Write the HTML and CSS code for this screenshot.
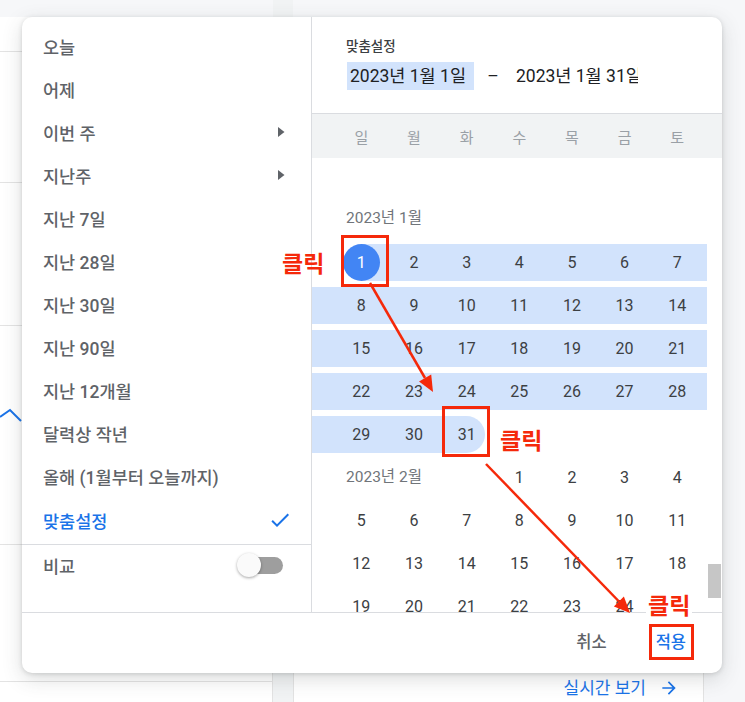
FILE: index.html
```html
<!DOCTYPE html>
<html lang="ko">
<head>
<meta charset="utf-8">
<title>기간 선택</title>
<link rel="stylesheet" href="styles.css">
</head>
<body>
<div class="page">
  <div class="bg-left">
    <div class="bg-row h35"></div>
    <div class="bg-row h131"></div>
    <div class="bg-row h143"></div>
    <div class="bg-row h139">
      <svg class="chev" width="22" height="20" viewBox="0 0 22 20"><polyline points="0,11 10,4 21,15" fill="none" stroke="#1a73e8" stroke-width="2"/></svg>
    </div>
    <div class="bg-row h137"></div>
  </div>
  <div class="bg-gutter"></div>
  <div class="bg-main">
    <a class="realtime">실시간 보기
      <svg width="20" height="20" viewBox="0 0 24 24"><path d="M12 4l-1.41 1.41L16.17 11H4v2h12.17l-5.58 5.59L12 20l8-8z" fill="#1a73e8"/></svg>
    </a>
  </div>
  <div class="bg-right"></div>
</div>

<div class="dialog">
  <div class="presets">
    <ul class="preset-list">
      <li>오늘</li>
      <li>어제</li>
      <li>이번 주<svg class="icon" width="24" height="24" viewBox="0 0 24 24"><polygon points="10,7 16.5,12 10,17" fill="#5f6368"/></svg></li>
      <li>지난주<svg class="icon" width="24" height="24" viewBox="0 0 24 24"><polygon points="10,7 16.5,12 10,17" fill="#5f6368"/></svg></li>
      <li>지난 7일</li>
      <li>지난 28일</li>
      <li>지난 30일</li>
      <li>지난 90일</li>
      <li>지난 12개월</li>
      <li>달력상 작년</li>
      <li>올해 (1월부터 오늘까지)</li>
      <li class="active">맞춤설정<svg class="icon" width="24" height="24" viewBox="0 0 24 24"><path d="M9 16.17L4.83 12l-1.42 1.41L9 19 21 7l-1.41-1.41z" fill="#1a73e8"/></svg></li>
    </ul>
    <div class="compare">
      <span>비교</span>
      <span class="toggle"><span class="track"></span><span class="knob"></span></span>
    </div>
  </div>

  <div class="range">
    <div class="range-head">
      <div class="head-label">맞춤설정</div>
      <div class="date-row">
        <span class="date-field active">2023년 1월 1일</span>
        <span class="dash">–</span>
        <span class="date-field end">2023년 1월 31일</span>
      </div>
    </div>
    <div class="weekdays">
      <span>일</span><span>월</span><span>화</span><span>수</span><span>목</span><span>금</span><span>토</span>
    </div>
    <div class="cal-body">
      <div class="cal-scroll">
        <div class="month-label">2023년 1월</div>
        <div class="week start"><span class="sel">1</span><span>2</span><span>3</span><span>4</span><span>5</span><span>6</span><span>7</span></div>
        <div class="week in-range"><span>8</span><span>9</span><span>10</span><span>11</span><span>12</span><span>13</span><span>14</span></div>
        <div class="week in-range"><span>15</span><span>16</span><span>17</span><span>18</span><span>19</span><span>20</span><span>21</span></div>
        <div class="week in-range"><span>22</span><span>23</span><span>24</span><span>25</span><span>26</span><span>27</span><span>28</span></div>
        <div class="week end"><span>29</span><span>30</span><span class="range-end">31</span></div>
        <div class="week"><span class="month-inline">2023년 2월</span><span>1</span><span>2</span><span>3</span><span>4</span></div>
        <div class="week"><span>5</span><span>6</span><span>7</span><span>8</span><span>9</span><span>10</span><span>11</span></div>
        <div class="week"><span>12</span><span>13</span><span>14</span><span>15</span><span>16</span><span>17</span><span>18</span></div>
        <div class="week"><span>19</span><span>20</span><span>21</span><span>22</span><span>23</span><span>24</span><span>25</span></div>
      </div>
      <div class="scrollbar"><div class="thumb"></div></div>
    </div>
  </div>

  <div class="footer">
    <button class="btn cancel">취소</button>
    <button class="btn apply">적용</button>
  </div>
</div>

<div class="annot">
  <svg class="arrows" width="745" height="702" viewBox="0 0 745 702">
    <line x1="370" y1="283" x2="425" y2="378" stroke="#f5290a" stroke-width="2.5"/>
    <polygon points="433,392 419,381.6 431.2,374.6" fill="#f5290a"/>
    <line x1="486" y1="464" x2="619" y2="601.5" stroke="#f5290a" stroke-width="2.5"/>
    <polygon points="630,613 613.9,606.4 623.9,596.6" fill="#f5290a"/>
  </svg>
  <div class="annot-box b1"></div>
  <div class="annot-box b2"></div>
  <div class="annot-box b3"></div>
  <div class="annot-label l1">클릭</div>
  <div class="annot-label l2">클릭</div>
  <div class="annot-label l3">클릭</div>
</div>
</body>
</html>
```

FILE: styles.css
```css
* { box-sizing: border-box; margin: 0; padding: 0; }

body {
  width: 745px;
  height: 702px;
  overflow: hidden;
  position: relative;
  background: #f6f7f9;
  font-family: Roboto, "Noto Sans CJK KR", sans-serif;
}

/* background page */
.page {
  display: flex;
  height: 702px;
}
.bg-left {
  width: 273px;
  margin-top: 17px;
  background: #fff;
  border-right: 1px solid #e3e3e3;
}
.bg-row { border-bottom: 1px solid #e3e3e3; position: relative; }
.h35 { height: 35px; }
.h131 { height: 131px; }
.h143 { height: 143px; }
.h139 { height: 139px; }
.h137 { height: 137px; }
.chev { display: block; margin-top: 80px; }
.bg-gutter {
  width: 20px;
  background: #f1f3f4;
}
.bg-main {
  width: 411px;
  margin-top: 17px;
  background: #fff;
  border-left: 1px solid #e3e3e3;
  border-right: 1px solid #e3e3e3;
  display: flex;
  flex-direction: column;
  justify-content: flex-end;
  align-items: flex-end;
  padding: 0 24px 4px 0;
}
.realtime {
  display: flex;
  align-items: center;
  gap: 13px;
  color: #1a73e8;
  font-size: 17px;
  line-height: 20px;
  text-decoration: none;
}
.bg-right { flex: 1; }

/* dialog */
.dialog {
  position: absolute;
  left: 22px;
  top: 17px;
  width: 700px;
  height: 656px;
  background: #fff;
  border-radius: 10px;
  box-shadow: 0 1px 4px rgba(60, 64, 67, 0.18), 0 6px 20px rgba(60, 64, 67, 0.18);
  display: grid;
  grid-template-columns: 290px 410px;
  grid-template-rows: 595px 61px;
  overflow: hidden;
}

.presets {
  border-right: 1px solid #dadce0;
  display: flex;
  flex-direction: column;
}
.preset-list {
  list-style: none;
  padding: 7.5px 0 2px;
}
.preset-list li {
  height: 43.1px;
  display: flex;
  align-items: center;
  justify-content: space-between;
  padding: 0 19px 0 21px;
  font-size: 17.5px;
  font-weight: 500;
  color: #5f6368;
}
.preset-list li.active { color: #1a73e8; }
.icon { display: block; }

.compare {
  border-top: 1px solid #dadce0;
  height: 42px;
  display: flex;
  align-items: center;
  justify-content: space-between;
  padding: 0 28px 0 21px;
  font-size: 17.5px;
  font-weight: 500;
  color: #5f6368;
}
.toggle {
  position: relative;
  width: 46px;
  height: 24px;
  display: flex;
  align-items: center;
  justify-content: flex-end;
}
.track {
  width: 34px;
  height: 17px;
  border-radius: 9px;
  background: #9e9e9e;
}
.knob {
  position: absolute;
  left: 0;
  top: 0;
  width: 24px;
  height: 24px;
  border-radius: 50%;
  background: #fafafa;
  box-shadow: 0 1px 3px rgba(0, 0, 0, 0.35);
}

.range {
  display: flex;
  flex-direction: column;
  min-height: 0;
}
.range-head {
  height: 97px;
  border-bottom: 1px solid #dadce0;
  padding: 21px 0 0 34px;
}
.head-label {
  font-size: 13.5px;
  line-height: 16px;
  font-weight: 500;
  color: #3c4043;
  margin-bottom: 8px;
}
.date-row {
  display: flex;
  align-items: center;
  height: 28px;
  font-size: 17.5px;
  color: #202124;
}
.date-field {
  display: block;
  height: 28px;
  line-height: 28px;
  white-space: nowrap;
  overflow: hidden;
}
.date-field.active {
  width: 127px;
  margin-left: 1px;
  padding-left: 3px;
  background: #d2e3fc;
}
.dash {
  width: 38px;
  text-align: center;
}
.date-field.end {
  width: 126px;
  padding-left: 4px;
}

.weekdays {
  height: 44px;
  background: #f1f3f4;
  display: grid;
  grid-template-columns: repeat(7, 52.67px);
  padding-left: 23px;
  align-items: center;
  text-align: center;
  font-size: 15px;
  color: #9aa0a6;
}

.cal-body {
  flex: 1;
  display: flex;
  overflow: hidden;
  min-height: 0;
}
.cal-scroll {
  width: 395px;
  overflow: hidden;
  padding-top: 50px;
}
.month-label {
  padding-left: 34px;
  font-size: 15.5px;
  line-height: 20px;
  color: #70757a;
  margin-bottom: 16px;
}
.week {
  display: grid;
  grid-template-columns: repeat(7, 52.67px);
  padding-left: 23px;
  height: 37px;
  margin-bottom: 6px;
}
.week span {
  position: relative;
  z-index: 0;
  text-align: center;
  font-size: 16px;
  line-height: 37px;
  color: #3c4043;
}
.week.in-range { background: #d2e3fc; }
.week.start { background: linear-gradient(90deg, transparent 49.3px, #d2e3fc 49.3px); }
.week.end { background: linear-gradient(90deg, #d2e3fc 154.7px, transparent 154.7px); }
.week span.sel { color: #fff; }
.week span.sel::before,
.week span.range-end::before {
  content: "";
  position: absolute;
  z-index: -1;
  left: 50%;
  top: 0;
  width: 37px;
  height: 37px;
  margin-left: -18.5px;
  border-radius: 50%;
}
.week span.sel::before { background: #4285f4; }
.week span.range-end::before { background: #d2e3fc; }
.week span.month-inline {
  grid-column: span 3;
  text-align: left;
  padding-left: 11px;
  font-size: 15.5px;
  color: #70757a;
}

.scrollbar { width: 15px; }
.thumb {
  margin-top: 406px;
  margin-left: 1px;
  width: 13px;
  height: 34px;
  background: #c6c6c6;
}

.footer {
  grid-column: 1 / -1;
  border-top: 1px solid #dadce0;
  display: flex;
  justify-content: flex-end;
  align-items: center;
  gap: 33px;
  padding-right: 28px;
}
.btn {
  border: 0;
  background: none;
  padding: 0 8px;
  font-family: Roboto, "Noto Sans CJK KR", sans-serif;
  font-size: 16.5px;
  font-weight: 500;
  line-height: 20px;
}
.cancel { color: #5f6368; }
.apply { color: #1a73e8; }

/* annotations overlay */
.annot {
  position: absolute;
  left: 0;
  top: 0;
  width: 745px;
  height: 702px;
  pointer-events: none;
}
.arrows { position: absolute; left: 0; top: 0; }
.annot-box {
  position: absolute;
  border: 3px solid #f5290a;
}
.b1 { left: 341px; top: 235px; width: 48px; height: 52px; }
.b2 { left: 442px; top: 406px; width: 48px; height: 51px; }
.b3 { left: 649px; top: 624px; width: 45px; height: 36px; }
.annot-label {
  position: absolute;
  font-family: "Noto Sans CJK KR", sans-serif;
  font-size: 23px;
  font-weight: 700;
  line-height: 24px;
  color: #f5290a;
}
.l1 { left: 282px; top: 250px; }
.l2 { left: 500px; top: 427px; }
.l3 { left: 646px; top: 592px; padding: 0 2px; background: #fff; }
```
